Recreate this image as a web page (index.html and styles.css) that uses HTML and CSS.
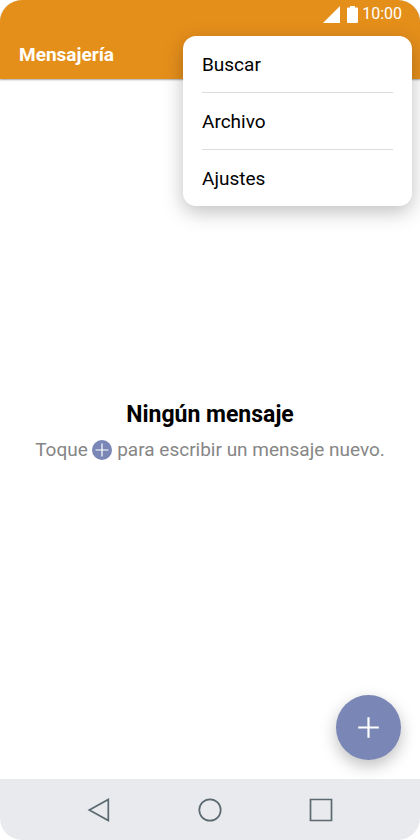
FILE: index.html
```html
<!DOCTYPE html>
<html lang="es">
<head>
<meta charset="utf-8">
<meta name="viewport" content="width=device-width, initial-scale=1">
<title>Mensajería</title>
<link rel="stylesheet" href="styles.css">
</head>
<body>
<div class="phone">
  <header class="app-bar">
    <div class="status">
      <svg class="signal" width="17" height="17" viewBox="0 0 17 17" aria-hidden="true"><path d="M17 0V17H0Z" fill="#fff"/></svg>
      <svg class="battery" width="11" height="17" viewBox="0 0 11 17" aria-hidden="true"><path d="M3 0H8V1.5H10Q11 1.5 11 2.5V16Q11 17 10 17H1Q0 17 0 16V2.5Q0 1.5 1 1.5H3Z" fill="#fff"/></svg>
      <time>10:00</time>
    </div>
    <h1 class="title">Mensajería</h1>
    <nav class="menu" aria-label="Opciones">
      <button type="button">Buscar</button>
      <button type="button">Archivo</button>
      <button type="button">Ajustes</button>
    </nav>
  </header>
  <main class="content">
    <h2 class="empty-title">Ningún mensaje</h2>
    <p class="empty-text">Toque <svg class="inline-plus" width="20" height="20" viewBox="0 0 20 20" aria-hidden="true"><circle cx="10" cy="10" r="10" fill="#7986b6"/><path d="M10 3.5V16.5M3.5 10H16.5" stroke="#fff" stroke-width="1.2"/></svg> para escribir un mensaje nuevo.</p>
    <button type="button" class="fab" aria-label="Mensaje nuevo">
      <svg width="21" height="21" viewBox="0 0 21 21" aria-hidden="true"><path d="M10.5 .2V20.8M.2 10.5H20.8" stroke="#fff" stroke-width="2.2"/></svg>
    </button>
  </main>
  <nav class="nav-bar" aria-label="Sistema">
    <button type="button" aria-label="Atrás"><svg width="24" height="24" viewBox="0 0 24 24"><path d="M2.3 12L21.3 1.5V22.5Z" fill="none" stroke="#5b6970" stroke-width="1.7"/></svg></button>
    <button type="button" aria-label="Inicio"><svg width="24" height="24" viewBox="0 0 24 24"><circle cx="12" cy="12" r="10.7" fill="none" stroke="#5b6970" stroke-width="1.7"/></svg></button>
    <button type="button" aria-label="Recientes"><svg width="24" height="24" viewBox="0 0 24 24"><path d="M1.5 1.5H22.5V22.5H1.5Z" fill="none" stroke="#5b6970" stroke-width="1.7"/></svg></button>
  </nav>
</div>
</body>
</html>
```
FILE: styles.css
```css
* {
  box-sizing: border-box;
}

body {
  margin: 0;
  background: #fff;
  font-family: Roboto, "Liberation Sans", sans-serif;
}

button {
  padding: 0;
  border: 0;
  background: none;
  font: inherit;
  color: inherit;
}

svg {
  display: block;
}

.phone {
  display: flex;
  flex-direction: column;
  min-height: 100vh;
}

.app-bar {
  position: relative;
  z-index: 1;
  padding-bottom: 12px;
  border-radius: 22px 22px 0 0;
  background: #e58f1b;
  color: #fff;
  box-shadow: 0 1px 2px rgba(0, 0, 0, 0.35);
}

.status {
  display: flex;
  align-items: center;
  justify-content: flex-end;
  gap: 7px;
  height: 28px;
  padding-right: 18px;
  font-size: 16px;
}

.status time {
  margin-left: -3px;
  line-height: 30px;
}

.title {
  margin: 15px 19px 0;
  font-size: 19px;
  line-height: 24px;
  font-weight: 700;
}

.menu {
  position: absolute;
  top: 36px;
  right: 8px;
  width: 229px;
  padding: 0 19px;
  border-radius: 13px;
  background: #fff;
  color: #000;
  box-shadow: 0 6px 20px rgba(0, 0, 0, 0.25);
}

.menu button {
  display: block;
  width: 100%;
  height: 57px;
  border-bottom: 1px solid #dcdcdc;
  font-size: 19px;
  text-align: left;
}

.menu button:last-child {
  height: 56px;
  border-bottom: 0;
}

.content {
  position: relative;
  display: flex;
  flex: 1;
  flex-direction: column;
  align-items: center;
  justify-content: center;
  gap: 7px;
  padding-top: 7px;
  text-align: center;
}

.empty-title {
  margin: 0;
  font-size: 23px;
  line-height: 28px;
  font-weight: 700;
  color: #000;
}

.empty-text {
  margin: 0;
  font-size: 19px;
  line-height: 28px;
  color: #868686;
}

.inline-plus {
  display: inline-block;
  vertical-align: -4px;
}

.fab {
  position: absolute;
  right: 19px;
  bottom: 19px;
  display: grid;
  place-items: center;
  width: 65px;
  height: 65px;
  border-radius: 50%;
  background: #7986b6;
  box-shadow: 0 6px 16px rgba(0, 0, 0, 0.25);
}

.nav-bar {
  position: relative;
  display: flex;
  justify-content: center;
  gap: 87px;
  padding: 19px 0 18px;
  border-radius: 0 0 22px 22px;
  background: #e8eaed;
}
```
